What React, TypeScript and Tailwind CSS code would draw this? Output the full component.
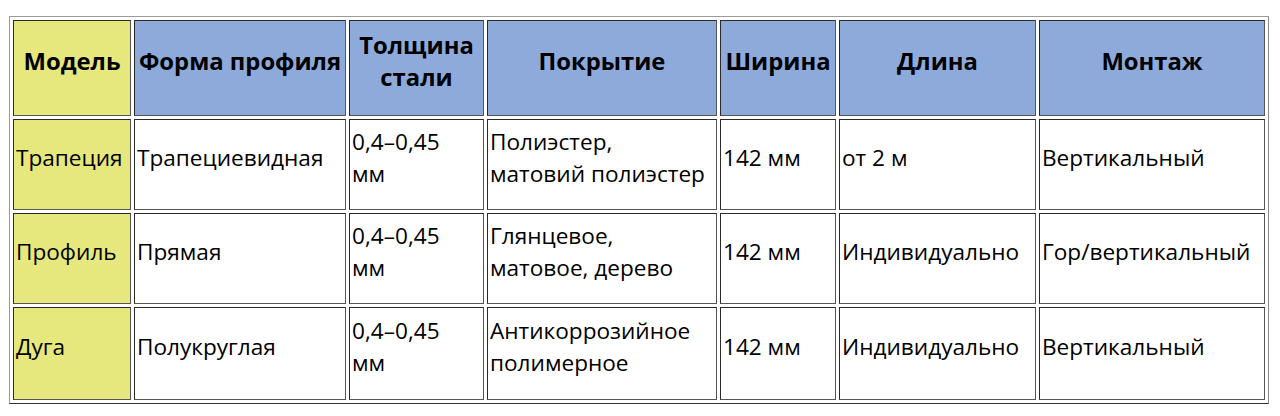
import React from "react";

const cell =
  "flex items-center pb-[14px] border border-t-[#2a2a2a] border-l-[#2a2a2a] border-r-[#555] border-b-[#555]";

const header = [
  { t: ["Модель"], bg: "bg-[#e6e87e]" },
  { t: ["Форма профиля"] },
  { t: ["Толщина", "стали"] },
  { t: ["Покрытие"] },
  { t: ["Ширина"] },
  { t: ["Длина"] },
  { t: ["Монтаж"] },
];

const rows: string[][][] = [
  [["Трапеция"], ["Трапециевидная"], ["0,4–0,45", "мм"], ["Полиэстер,", "матовий полиэстер"], ["142 мм"], ["от 2 м"], ["Вертикальный"]],
  [["Профиль"], ["Прямая"], ["0,4–0,45", "мм"], ["Глянцевое,", "матовое, дерево"], ["142 мм"], ["Индивидуально"], ["Гор/вертикальный"]],
  [["Дуга"], ["Полукруглая"], ["0,4–0,45", "мм"], ["Антикоррозийное", "полимерное"], ["142 мм"], ["Индивидуально"], ["Вертикальный"]],
];

export default function App() {
  return (
    <div
      className="w-[1280px] h-[416px] bg-white overflow-hidden text-black"
      style={{ fontFamily: '"Open Sans", "Noto Sans", sans-serif' }}
    >
      <div className="ml-[9px] mt-[16px] w-fit border border-t-[#9a9a9a] border-l-[#9a9a9a] border-r-[#8a8a8a] border-b-[#333] p-[3px]">
        <div className="grid grid-cols-[118px_212px_135px_230px_116px_197px_226px] grid-rows-[96px_91px_91px_93px] gap-[3px]">
          {header.map((h, i) => (
            <div
              key={i}
              className={`${cell} justify-center text-center font-bold text-[23.8px] leading-[32px] whitespace-nowrap ${h.bg ?? "bg-[#8eaadb]"}`}
            >
              <div>
                {h.t.map((l, j) => (
                  <div key={j}>{l}</div>
                ))}
              </div>
            </div>
          ))}
          {rows.map((r, ri) =>
            r.map((c, ci) => (
              <div
                key={`${ri}-${ci}`}
                className={`${cell} pl-[2px] text-[22.6px] leading-[32px] whitespace-nowrap ${ci === 0 ? "bg-[#e6e87e]" : "bg-white"}`}
              >
                <div>
                  {c.map((l, j) => (
                    <div key={j}>{l}</div>
                  ))}
                </div>
              </div>
            ))
          )}
        </div>
      </div>
    </div>
  );
}
